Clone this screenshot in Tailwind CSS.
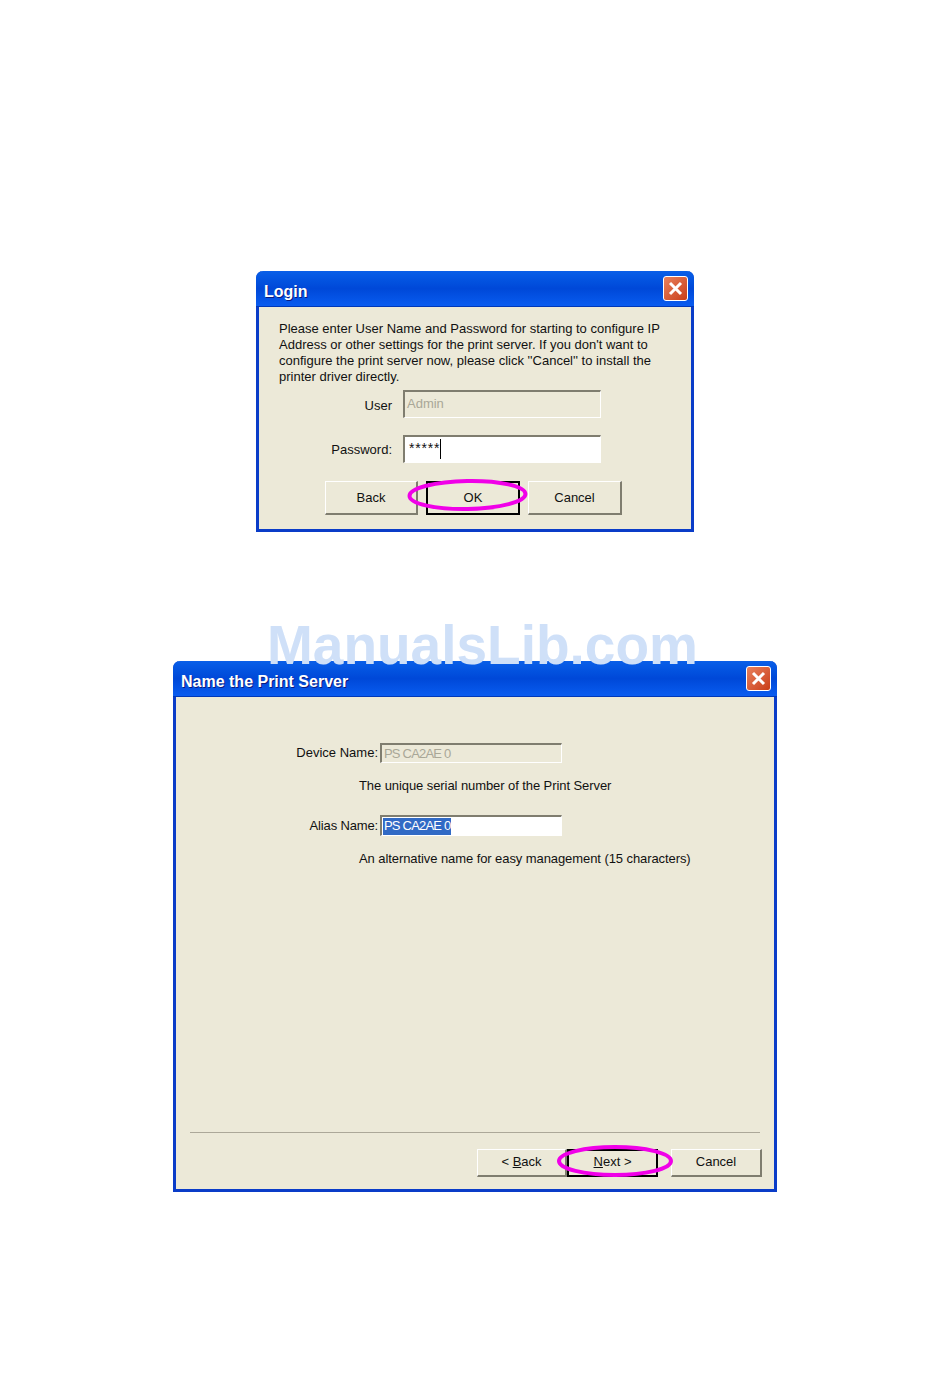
<!DOCTYPE html>
<html lang="en">
<head>
  <meta charset="UTF-8" />
  <title>Print Server Setup</title>
  <script src="https://cdn.jsdelivr.net/npm/@tailwindcss/browser@4"></script>
</head>
<body class="bg-white">
<div class="relative w-[950px] h-[1398px] flex flex-col items-center pt-[271px] font-['Liberation_Sans',sans-serif] text-[13px] leading-4 text-[#111]">

  <!-- Login dialog -->
  <div class="w-[438px] h-[261px] flex flex-col bg-[#ece9d8] border-x-[3px] border-b-[3px] border-[#0a3cc8] rounded-t-[7px]">
    <div class="-mx-[3px] h-[36px] shrink-0 flex items-center justify-between pl-2 pr-[6px] rounded-t-[7px] bg-gradient-to-b from-[#0a5fe8] via-[#0048d8] to-[#0a5cf0] border-b border-[#0038b8]">
      <span class="mt-[6px] text-white font-bold text-[16px] [text-shadow:1px_1px_0_#0a1a80]">Login</span>
      <div class="w-[25px] h-[25px] flex items-center justify-center rounded-[3px] border border-white bg-gradient-to-br from-[#e8805c] to-[#c93c14]">
        <svg width="15" height="15" viewBox="0 0 15 15"><path d="M2 2 L13 13 M13 2 L2 13" stroke="white" stroke-width="3" /></svg>
      </div>
    </div>
    <div class="flex flex-col pt-[14px] pl-[20px]">
      <p class="w-[395px] whitespace-nowrap">Please enter User Name and Password for starting to configure IP<br>Address or other settings for the print server. If you don't want to<br>configure the print server now, please click ''Cancel'' to install the<br>printer driver directly.</p>
      <div class="flex items-center mt-[5px]">
        <span class="w-[113px] pt-[3px] text-right">User</span>
        <div class="ml-[11px] w-[198px] h-[28px] pl-[2px] pt-[4px] border-t-2 border-l-2 border-b border-r border-t-[#7f7d6f] border-l-[#7f7d6f] border-b-white border-r-white text-[#a9a797]">Admin</div>
      </div>
      <div class="flex items-center mt-[17px]">
        <span class="w-[113px] pt-[2px] text-right">Password:</span>
        <div class="ml-[11px] w-[198px] h-[28px] pl-[4px] pt-[3px] flex items-start bg-white border-t-2 border-l-2 border-b border-r border-t-[#7f7d6f] border-l-[#7f7d6f] border-b-white border-r-white">
          <span class="tracking-[0.8px] text-[14px]">*****</span><span class="w-px h-[20px] -mt-px bg-black"></span>
        </div>
      </div>
      <div class="flex items-start mt-[18px] ml-[46px]">
        <div class="w-[93px] h-[34px] flex items-center justify-center bg-[#ece9d8] border-t border-l border-white border-b-2 border-r-2 border-b-[#7f7d6f] border-r-[#7f7d6f]">Back</div>
        <div class="relative ml-[8px] w-[94px] h-[34px] flex items-center justify-center border-2 border-black">
          OK
          <svg class="absolute left-[-21px] top-[-5px] z-10" width="122" height="36" viewBox="0 0 122 36" fill="none"><ellipse cx="60.500" cy="17" rx="58" ry="14" stroke="#f000e8" stroke-width="4" transform="rotate(-1 60 17)" /></svg>
        </div>
        <div class="ml-[8px] w-[94px] h-[34px] flex items-center justify-center bg-[#ece9d8] border-t border-l border-white border-b-2 border-r-2 border-b-[#7f7d6f] border-r-[#7f7d6f]">Cancel</div>
      </div>
    </div>
  </div>

  <!-- Name the Print Server dialog -->
  <div class="mt-[129px] w-[604px] h-[531px] flex flex-col bg-[#ece9d8] border-x-[3px] border-b-[3px] border-[#0a3cc8] rounded-t-[7px]">
    <div class="-mx-[3px] h-[36px] shrink-0 flex items-center justify-between pl-2 pr-[6px] rounded-t-[7px] bg-gradient-to-b from-[#0a5fe8] via-[#0048d8] to-[#0a5cf0] border-b border-[#0038b8]">
      <span class="mt-[6px] text-white font-bold text-[16px] [text-shadow:1px_1px_0_#0a1a80]">Name the Print Server</span>
      <div class="w-[25px] h-[25px] flex items-center justify-center rounded-[3px] border border-white bg-gradient-to-br from-[#e8805c] to-[#c93c14]">
        <svg width="15" height="15" viewBox="0 0 15 15"><path d="M2 2 L13 13 M13 2 L2 13" stroke="white" stroke-width="3" /></svg>
      </div>
    </div>
    <div class="flex-1 flex flex-col">
      <div class="flex items-center mt-[46px]">
        <span class="w-[202px] text-right">Device Name:</span>
        <div class="ml-[2px] w-[182px] h-[20px] pl-[2px] flex items-center border-t-2 border-l-2 border-b border-r border-t-[#7f7d6f] border-l-[#7f7d6f] border-b-white border-r-white text-[#a9a797] tracking-[-0.8px]">PS CA2AE 0</div>
      </div>
      <p class="mt-[15px] ml-[183px] tracking-[-0.08px]">The unique serial number of the Print Server</p>
      <div class="flex items-center mt-[21px]">
        <span class="w-[202px] text-right tracking-[-0.15px]">Alias Name:</span>
        <div class="ml-[2px] w-[182px] h-[21px] pl-[1px] flex items-center bg-white border-t-2 border-l-2 border-b border-r border-t-[#7f7d6f] border-l-[#7f7d6f] border-b-white border-r-white">
          <span class="bg-[#316ac5] text-white pl-[1px] pr-[1px] h-[17px] tracking-[-0.8px]">PS CA2AE 0</span>
        </div>
      </div>
      <p class="mt-[15px] ml-[183px] tracking-[-0.08px]">An alternative name for easy management (15 characters)</p>
      <div class="mt-auto mx-[14px] border-t border-[#aca899]"></div>
      <div class="flex items-start mt-[16px] ml-[301px] mb-[12px]">
        <div class="w-[90px] h-[28px] pb-[2px] flex items-center justify-center bg-[#ece9d8] border-t border-l border-white border-b-2 border-r-2 border-b-[#7f7d6f] border-r-[#7f7d6f]">&lt;&nbsp;<span class="underline">B</span>ack</div>
        <div class="relative w-[91px] h-[28px] pb-[2px] flex items-center justify-center border-2 border-black">
          <span><span class="underline">N</span>ext &gt;</span>
          <svg class="absolute left-[-13px] top-[-6px] z-10" width="120" height="36" viewBox="0 0 120 36" fill="none"><ellipse cx="59" cy="16" rx="56" ry="14" stroke="#f000e8" stroke-width="4" /></svg>
        </div>
        <div class="ml-[13px] w-[91px] h-[28px] pb-[2px] flex items-center justify-center bg-[#ece9d8] border-t border-l border-white border-b-2 border-r-2 border-b-[#7f7d6f] border-r-[#7f7d6f]">Cancel</div>
      </div>
    </div>
  </div>

  <!-- Watermark -->
  <div class="absolute left-[267px] top-[615px] z-20 font-bold text-[55px] leading-[60px] text-[#cfe0f8]">ManualsLib.com</div>
</div>
</body>
</html>
